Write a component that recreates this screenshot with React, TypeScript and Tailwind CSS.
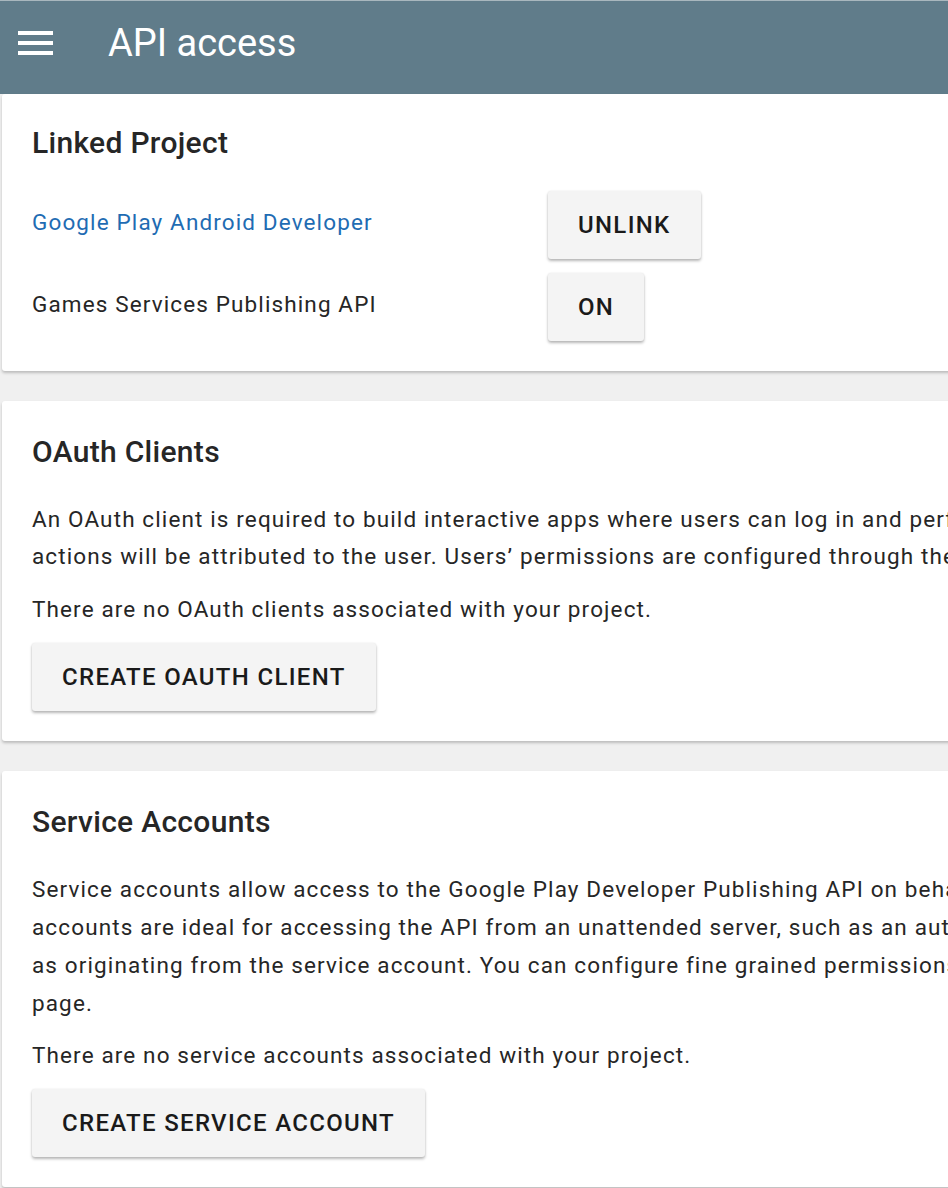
import React from 'react';

const oauthLines = [
  'An OAuth client is required to build interactive apps where users can log in and perform actions with their own credentials. These',
  'actions will be attributed to the user. Users’ permissions are configured through the Users & permissions page.',
];

const serviceLines = [
  'Service accounts allow access to the Google Play Developer Publishing API on behalf of an application rather than an end user. Service',
  'accounts are ideal for accessing the API from an unattended server, such as an automated build server (e.g. Jenkins). All actions will be shown',
  'as originating from the service account. You can configure fine grained permissions for the service account on the Users & permissions',
  'page.',
];

const RaisedButton = ({ label }: { label: string }) => (
  <button className="h-[68px] px-[30px] rounded-[3px] bg-[#f4f4f4] text-[24px] font-medium tracking-[0.055em] text-[#1a1a1a] shadow-[0_2px_3px_rgba(0,0,0,0.28),0_0_2px_rgba(0,0,0,0.08)]">
    {label}
  </button>
);

const Card = ({ children, className = '' }: { children: React.ReactNode; className?: string }) => (
  <section
    className={`ml-[2px] w-[1300px] rounded-[3px] bg-white px-[30px] shadow-[0_2px_3px_rgba(0,0,0,0.22)] ${className}`}
  >
    {children}
  </section>
);

const App = () => {
  return (
    <div className="min-h-screen w-full overflow-hidden bg-[#f0f0f0] font-['Roboto',sans-serif] text-[#262626]">
      <header className="flex h-[94px] items-center border-t border-[#a9b7be] bg-[#607c8a] pb-[10px] pl-[18px]">
        <div className="flex flex-col gap-[6px]">
          <span className="block h-[4px] w-[35px] bg-white" />
          <span className="block h-[4px] w-[35px] bg-white" />
          <span className="block h-[4px] w-[35px] bg-white" />
        </div>
        <h1 className="ml-[55px] text-[38px] font-normal leading-none text-white">API access</h1>
      </header>

      <Card className="pt-[31px] pb-[30px]">
        <h2 className="text-[30px] font-medium leading-[36px] tracking-[0.01em]">Linked Project</h2>
        <div className="mt-[30px] grid grid-cols-[516px_auto] items-center gap-y-[14px] text-[22.5px] tracking-[0.05em]">
          <a className="-mt-[4px] text-[#1f6cb3]">Google Play Android Developer</a>
          <div>
            <RaisedButton label="UNLINK" />
          </div>
          <span className="-mt-[4px]">Games Services Publishing API</span>
          <div>
            <RaisedButton label="ON" />
          </div>
        </div>
      </Card>

      <Card className="mt-[30px] pt-[33px] pb-[30px]">
        <h2 className="text-[30px] font-medium leading-[36px] tracking-[0.01em]">OAuth Clients</h2>
        <div className="text-[22.5px] tracking-[0.05em]">
          <p className="mt-[31px] leading-[37px]">
            {oauthLines.map((line) => (
              <span key={line} className="block whitespace-nowrap">
                {line}
              </span>
            ))}
          </p>
          <p className="mt-[16px] leading-[37px]">There are no OAuth clients associated with your project.</p>
        </div>
        <div className="mt-[15px]">
          <RaisedButton label="CREATE OAUTH CLIENT" />
        </div>
      </Card>

      <Card className="mt-[30px] pt-[33px] pb-[30px]">
        <h2 className="text-[30px] font-medium leading-[36px] tracking-[0.01em]">Service Accounts</h2>
        <div className="text-[22.5px] tracking-[0.05em]">
          <p className="mt-[30px] leading-[38px]">
            {serviceLines.map((line) => (
              <span key={line} className="block whitespace-nowrap">
                {line}
              </span>
            ))}
          </p>
          <p className="mt-[15px] leading-[37px]">There are no service accounts associated with your project.</p>
        </div>
        <div className="mt-[15px]">
          <RaisedButton label="CREATE SERVICE ACCOUNT" />
        </div>
      </Card>
    </div>
  );
};

export default App;
